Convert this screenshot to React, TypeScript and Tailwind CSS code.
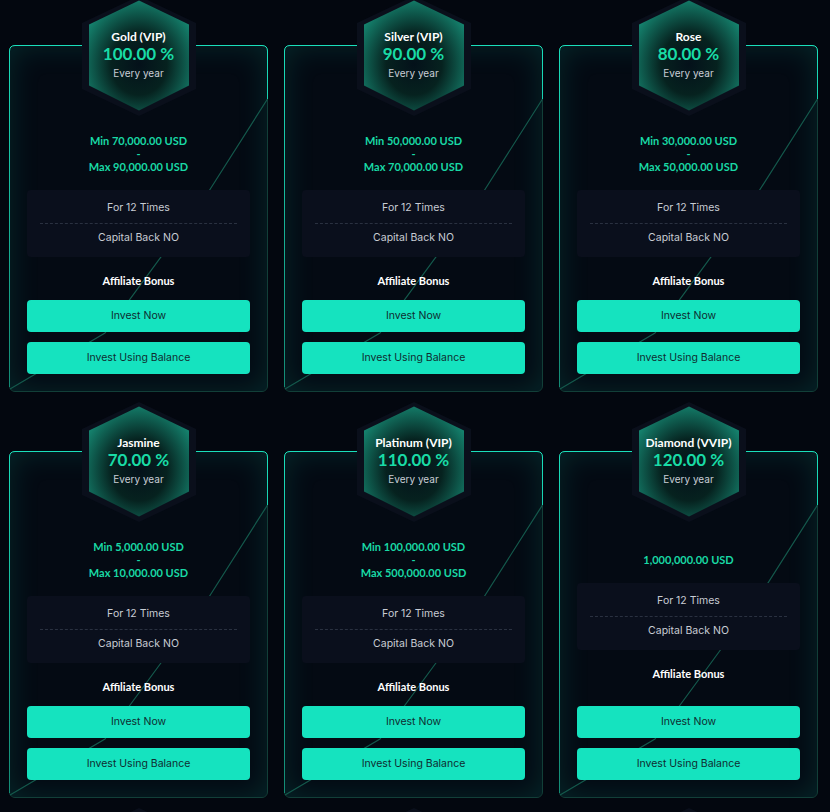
import { useId } from "react";

type Plan = {
  name: string;
  pct: string;
  min?: string;
  max?: string;
  fixed?: string;
};

const plans: Plan[] = [
  { name: "Gold (VIP)", pct: "100.00 %", min: "70,000.00", max: "90,000.00" },
  { name: "Silver (VIP)", pct: "90.00 %", min: "50,000.00", max: "70,000.00" },
  { name: "Rose", pct: "80.00 %", min: "30,000.00", max: "50,000.00" },
  { name: "Jasmine", pct: "70.00 %", min: "5,000.00", max: "10,000.00" },
  { name: "Platinum (VIP)", pct: "110.00 %", min: "100,000.00", max: "500,000.00" },
  { name: "Diamond (VVIP)", pct: "120.00 %", fixed: "1,000,000.00" },
];

function HexShape() {
  const id = useId().replace(/:/g, "");
  return (
    <svg width="114" height="120" viewBox="0 0 114 120" className="absolute inset-0">
      <defs>
        <radialGradient id={`hx${id}`} cx="50%" cy="58%" r="62%">
          <stop offset="0%" stopColor="#04111a" />
          <stop offset="45%" stopColor="#06221f" />
          <stop offset="100%" stopColor="#158570" />
        </radialGradient>
      </defs>
      <polygon points="57,0 114,27 114,93 57,120 0,93 0,27" fill="#0a0f1b" />
      <polygon points="57,4.5 107,28.5 107,89.5 57,114.5 7,89.5 7,28.5" fill={`url(#hx${id})`} />
    </svg>
  );
}

function Hexagon({ name, pct }: { name?: string; pct?: string }) {
  return (
    <div className="absolute left-1/2 top-[-4px] z-10 h-[120px] w-[114px] -translate-x-1/2">
      <HexShape />
      {name && (
        <div className="relative flex flex-col items-center pt-[33px] font-['Lato',sans-serif]">
          <div className="text-[12px] font-bold leading-[15px] text-white">{name}</div>
          <div className="text-[17px] font-bold leading-[20px] text-[#19dba6]">{pct}</div>
          <div className="mt-[3px] font-['Inter',sans-serif] text-[10px] leading-[13px] text-[#c9ced6]">
            Every year
          </div>
        </div>
      )}
    </div>
  );
}

function CardLines() {
  const id = useId().replace(/:/g, "");
  return (
    <svg
      className="pointer-events-none absolute inset-[-1px]"
      width="259"
      height="347"
      viewBox="0 0 259 347"
    >
      <defs>
        <linearGradient id={`bd${id}`} x1="0" y1="0" x2="0" y2="1">
          <stop offset="0%" stopColor="#1adfbb" />
          <stop offset="100%" stopColor="#148a74" />
        </linearGradient>
      </defs>
      <path
        d="M258.5 54 L200 146 Q150 215 96 288 L1 344"
        fill="none"
        stroke="#14594c"
        strokeWidth="1.2"
      />
      <path
        d="M258.5 54 L258.5 6 Q258.5 0.5 253 0.5 L6 0.5 Q0.5 0.5 0.5 6 L0.5 342"
        fill="none"
        stroke={`url(#bd${id})`}
        strokeWidth="1"
      />
    </svg>
  );
}

function PlanCard({ plan }: { plan: Plan }) {
  return (
    <div className="relative pt-[45px]">
      <Hexagon name={plan.name} pct={plan.pct} />
      <div className="relative flex h-[347px] flex-col rounded-[6px] border border-[#123f38] bg-[#040a13] px-[17px] pb-[17px] pt-[75px] shadow-[inset_0_0_30px_rgba(20,190,160,0.16)]">
        <CardLines />
        <div className="relative flex flex-1 flex-col justify-center">
          <div className="text-center font-['Lato',sans-serif] text-[11px] font-bold leading-[13px] text-[#19d9a5]">
            {plan.fixed ? (
              <div>{plan.fixed} USD</div>
            ) : (
              <>
                <div>Min {plan.min} USD</div>
                <div>-</div>
                <div>Max {plan.max} USD</div>
              </>
            )}
          </div>
          <div className="mt-[17px] rounded-[4px] bg-[#0a0f1c] px-[13px] pb-[11px] pt-[10px] text-center font-['Inter',sans-serif] text-[10.5px] leading-[16px] text-[#c8ccd4]">
            <div>For 12 Times</div>
            <div className="mt-[7px] border-t border-dashed border-[#2a3140]" />
            <div className="mt-[6px]">Capital Back NO</div>
          </div>
          <div className="mt-[17px] text-center font-['Lato',sans-serif] text-[11px] font-bold leading-[14px] text-white">
            Affiliate Bonus
          </div>
        </div>
        <div className="relative flex flex-col gap-[10px] font-['Inter',sans-serif] text-[10.5px] text-[#0f2c30]">
          <button className="h-[32px] rounded-[4px] bg-[#15e3bf]">Invest Now</button>
          <button className="h-[32px] rounded-[4px] bg-[#15e3bf]">Invest Using Balance</button>
        </div>
      </div>
    </div>
  );
}

export default function App() {
  return (
    <main className="h-[812px] overflow-hidden bg-[#03070f] pl-[9px]">
      <div className="grid grid-cols-[repeat(3,259px)] gap-x-4 gap-y-[14px]">
        {plans.map((p, i) => (
          <PlanCard key={i} plan={p} />
        ))}
        {[0, 1, 2].map((i) => (
          <div key={`n${i}`} className="relative h-[120px]">
            <Hexagon />
          </div>
        ))}
      </div>
    </main>
  );
}
